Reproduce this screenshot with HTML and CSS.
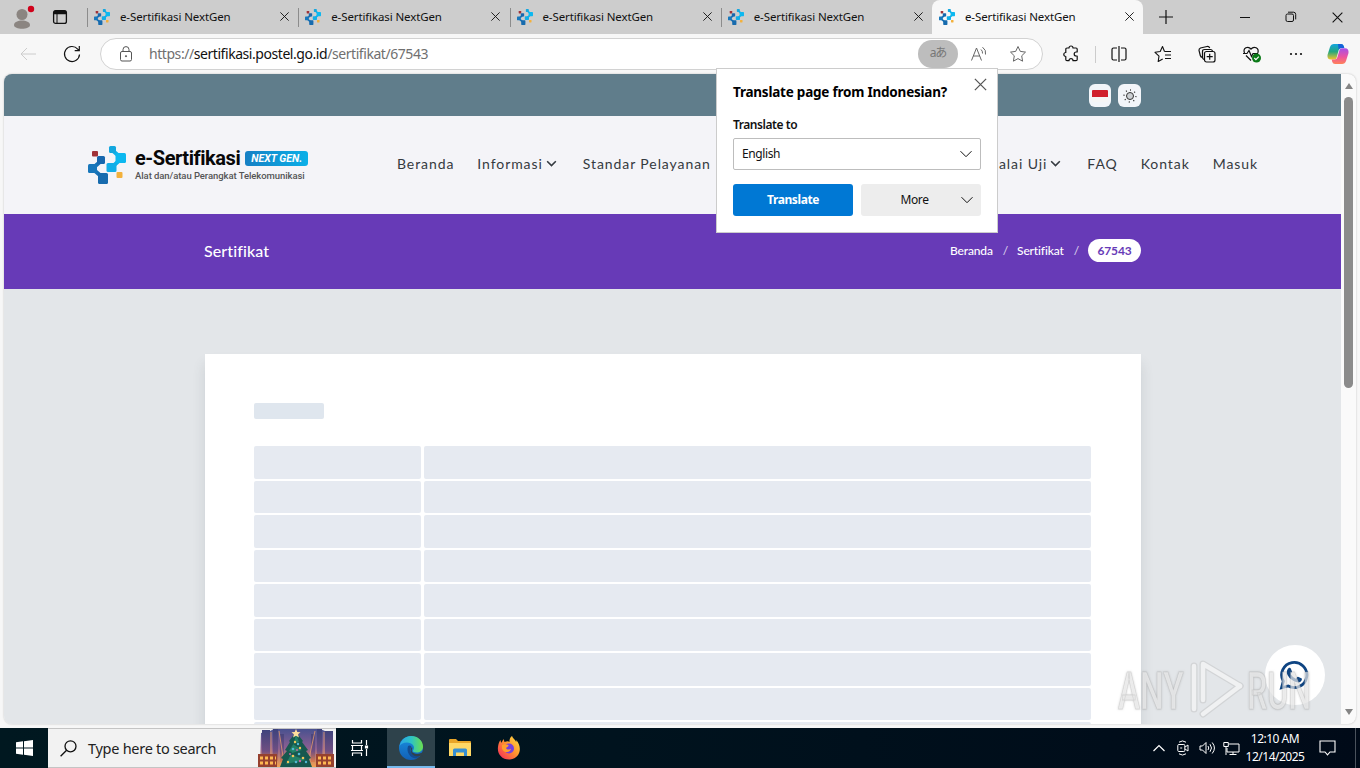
FILE: index.html
```html
<!DOCTYPE html>
<html lang="en">
<head>
    <meta charset="UTF-8">
    <meta name="viewport" content="width=device-width, initial-scale=1.0">
    <title>e-Sertifikasi NextGen</title>
    <link rel="stylesheet" href="styles.css">
</head>
<body>
    <!-- shared symbols -->
    <svg class="defs" width="0" height="0">
        <symbol id="logo" viewBox="0 0 38 38">
            <path fill="none" stroke="#1671b5" stroke-width="4" d="M13 15L5 22M6 24l8 7"/>
            <path fill="none" stroke="#0db2ea" stroke-width="4" d="M24 4l8 7M33 13l-9 8"/>
            <rect x="4" y="5" width="6" height="5.500" rx="1" fill="#a03238"/>
            <rect x="9" y="10" width="8" height="8" rx="1.500" fill="#1767ae"/>
            <rect x="0" y="18" width="9" height="9" rx="1.500" fill="#1877bb"/>
            <rect x="10" y="27" width="10" height="11" rx="1.500" fill="#176bae"/>
            <rect x="21" y="0" width="7" height="7" rx="1.500" fill="#13a7df"/>
            <rect x="27.500" y="7" width="10.500" height="10" rx="1.500" fill="#0db8f0"/>
            <rect x="18.500" y="17" width="10" height="9" rx="1.500" fill="#12aee8"/>
            <rect x="28.500" y="26" width="6" height="6" rx="1" fill="#f3b13c"/>
        </symbol>
        <symbol id="close" viewBox="0 0 12 12">
            <path fill="none" stroke="currentColor" d="M1.500 1.500l9 9M10.500 1.500l-9 9"/>
        </symbol>
        <symbol id="chev" viewBox="0 0 14 14">
            <path fill="none" stroke="currentColor" d="M1.500 4.200L7 9.700l5.500-5.500"/>
        </symbol>
    </svg>

    <div class="tabs">
        <div class="tabs-left">
            <svg class="profile" width="24" height="26" viewBox="0 0 24 26">
                <circle cx="11" cy="10.500" r="5.500" fill="#8b8581"/>
                <path fill="#8b8581" d="M3 21c0-6 16-6 16 0 0 5-16 5-16 0z"/>
                <circle cx="20" cy="5" r="3.200" fill="#d0021b"/>
            </svg>
            <svg class="workspace" width="16" height="16" viewBox="0 0 16 16" fill="none" stroke="#111">
                <rect x="1.600" y="1.600" width="12.800" height="12.800" rx="2" stroke-width="1.300"/>
                <path d="M2 3.500h12" stroke-width="3.500"/><path d="M5 4v10"/>
            </svg>
        </div>
        <div class="tab"><svg class="fav"><use href="#logo"/></svg><span>e-Sertifikasi NextGen</span><svg class="x"><use href="#close"/></svg></div>
        <div class="tab"><svg class="fav"><use href="#logo"/></svg><span>e-Sertifikasi NextGen</span><svg class="x"><use href="#close"/></svg></div>
        <div class="tab"><svg class="fav"><use href="#logo"/></svg><span>e-Sertifikasi NextGen</span><svg class="x"><use href="#close"/></svg></div>
        <div class="tab"><svg class="fav"><use href="#logo"/></svg><span>e-Sertifikasi NextGen</span><svg class="x"><use href="#close"/></svg></div>
        <div class="tab active"><svg class="fav"><use href="#logo"/></svg><span>e-Sertifikasi NextGen</span><svg class="x"><use href="#close"/></svg></div>
        <svg class="newtab" width="14" height="14" viewBox="0 0 14 14"><path stroke="#111" stroke-width="1.200" d="M7 0v14M0 7h14"/></svg>
        <div class="win">
            <svg width="12" height="12" viewBox="0 0 12 12"><path stroke="#111" d="M1 6.500h10"/></svg>
            <svg width="12" height="12" viewBox="0 0 12 12" fill="none" stroke="#111"><rect x="1" y="3" width="7.500" height="7.500" rx="1.500"/><path d="M3 1.200h5.500q2.200 0 2.200 2.200v5"/></svg>
            <svg width="13" height="13"><use href="#close"/></svg>
        </div>
    </div>

    <div class="toolbar">
        <svg class="back" width="16" height="14" viewBox="0 0 16 14" fill="none" stroke="#ccc"><path d="M16 7H1M7 1L1 7l6 6"/></svg>
        <svg class="reload" width="18" height="18" viewBox="0 0 18 18" fill="none" stroke="#111" stroke-width="1.200"><path d="M16.500 9.500a7.500 7.500 0 1 1-1.800-5.400l1.300 1.300M16.300 1v4.700h-4.600"/></svg>
        <div class="address">
            <svg class="lock" width="14" height="16" viewBox="0 0 14 16" fill="none" stroke="#555"><rect x="1.500" y="5.500" width="11" height="9.500" rx="1.500"/><path d="M4 5.500V3.600a3 3 0 0 1 6 0v1.900"/><circle cx="7" cy="10.200" r=".6" fill="#555"/></svg>
            <div class="url">https://<b>sertifikasi.postel.go.id</b>/sertifikat/67543</div>
            <div class="lang">aあ</div>
            <svg class="read" width="18" height="16" viewBox="0 0 18 16" fill="none" stroke="#666"><path d="M1.500 14.500L6.500 2l5 12.500M3.200 10h6.600M11 3.500q1.800 1.500 1.500 4M12.500 1.200q4 2.800 3 7.300"/></svg>
            <svg class="star" width="18" height="18" viewBox="0 0 18 18" fill="none" stroke="#666"><path stroke-linejoin="round" d="M9 1.500l2.300 4.900 5.200.7-3.800 3.700.9 5.400L9 13.600l-4.600 2.600.9-5.400L1.500 7.100l5.200-.7z"/></svg>
        </div>
        <div class="tools">
            <svg width="18" height="18" viewBox="0 0 18 18" fill="none" stroke="#111" stroke-width="1.200"><path stroke-linejoin="round" d="M5 3h2a2 2 0 0 1 4 0h3q1.200 0 1.200 1.200V7h-1a2 2 0 0 0 0 4h1v3.500q0 1.200-1.200 1.200h-3a2 2 0 0 0-4 0H5q-1.200 0-1.200-1.200V11.500a2 2 0 0 1 0-4V4.200Q3.800 3 5 3z"/></svg>
            <i class="sep"></i>
            <svg width="18" height="18" viewBox="0 0 18 18" fill="none" stroke="#111" stroke-width="1.200"><path d="M7 3H3.500Q2 3 2 4.500v9Q2 15 3.500 15H7M11 3h3.500Q16 3 16 4.500v9q0 1.500-1.500 1.500H11M9 1v16"/></svg>
            <svg width="18" height="18" viewBox="0 0 18 18" fill="none" stroke="#111" stroke-width="1.100"><path stroke-linejoin="round" d="M10.500 6.500L8.500 1.500 6.200 6.500l-5.200.8 4 3.900-.8 5.300 4.500-2.500M10.500 6.500H17M11 10h6M11 13.500h6"/></svg>
            <svg width="18" height="18" viewBox="0 0 18 18" fill="none" stroke="#111" stroke-width="1.200"><path d="M4.500 12.500Q2.800 12.300 2.300 10.500L1 5.500Q.8 3.800 2.500 3L9 1.500q2-.3 2.700 1.500M6 14.500q-1.500-.5-1.500-2.500V6.500q0-2 2-2h6q1.500 0 2 1.500"/><rect x="6.500" y="6.500" width="10.500" height="10.500" rx="2"/><path d="M11.700 8.700v6M8.700 11.700h6"/></svg>
            <svg width="20" height="18" viewBox="0 0 20 18" fill="none" stroke="#111" stroke-width="1.200"><path d="M2.500 8C.5 3 6 .5 9 4c3-3.500 8.500-1 6.800 4M1 8.500h4l2-3 2.500 6 1.500-3h5M4 10.500L9 15.500"/><circle cx="14.500" cy="13" r="4.500" fill="#0b7a18" stroke="none"/><path stroke="#fff" d="M12.300 13l1.600 1.600 2.900-3"/></svg>
            <svg width="16" height="18" viewBox="0 0 16 18" fill="#111"><circle cx="3" cy="9" r="1.100"/><circle cx="8" cy="9" r="1.100"/><circle cx="13" cy="9" r="1.100"/></svg>
            <svg class="copilot" width="22" height="22" viewBox="0 0 22 22">
                <defs>
                    <linearGradient id="ca" x2="0" y2="1"><stop stop-color="#13a5df"/><stop offset=".5" stop-color="#24a77e"/><stop offset="1" stop-color="#f4c52b"/></linearGradient>
                    <linearGradient id="cb" x2="0" y2="1"><stop stop-color="#a550e8"/><stop offset=".55" stop-color="#ed54a0"/><stop offset="1" stop-color="#ff8258"/></linearGradient>
                </defs>
                <path fill="url(#ca)" d="M7 1h7q2 0 2.700 2l.6 2h-3q-2 0-2.600 2L9.500 15q-.5 1.500-2 1.500H4Q0 16.500.5 12L3 4q1-3 4-3z"/>
                <path fill="#1462d9" d="M11 1h3q2 0 2.700 2l.6 2h-3q-2 0-2.600 2z"/>
                <path fill="url(#cb)" d="M15 21H8q-2 0-2.700-2l-.6-2.500h3q2 0 2.600-2L12.500 7q.5-1.700 2-1.700H18q4 0 3.500 4.700L19 18q-1 3-4 3z"/>
            </svg>
        </div>
    </div>

    <div class="view">
        <div class="page">
            <div class="topbar">
                <div class="chip"><i class="flag"></i></div>
                <div class="chip"><svg width="14" height="14" viewBox="0 0 14 14" fill="none" stroke="#333"><circle cx="7" cy="7" r="3.500" fill="#ccd0d4"/><path stroke-dasharray="1 3.710" d="M7 1a6 6 0 1 1-.01 0" stroke-width="1.300"/></svg></div>
            </div>
            <div class="header">
                <svg class="logo" width="38" height="38"><use href="#logo"/></svg>
                <div class="brand">
                    <div class="brand-top"><h1>e-Sertifikasi</h1><em>NEXT GEN.</em></div>
                    <p>Alat dan/atau Perangkat Telekomunikasi</p>
                </div>
                <div class="nav">
                    <a>Beranda</a>
                    <a class="drop">Informasi <svg><use href="#chev"/></svg></a>
                    <a>Standar Pelayanan</a>
                    <a class="drop push">Balai Uji <svg><use href="#chev"/></svg></a>
                    <a>FAQ</a>
                    <a>Kontak</a>
                    <a>Masuk</a>
                </div>
            </div>
            <div class="title">
                <h2>Sertifikat</h2>
                <div class="crumbs"><a>Beranda</a><i>/</i><a>Sertifikat</a><i>/</i><b>67543</b></div>
            </div>
            <div class="content">
                <div class="card">
                    <div class="skel-title"></div>
                    <div class="rows">
                        <div></div><div></div>
                        <div></div><div></div>
                        <div></div><div></div>
                        <div></div><div></div>
                        <div></div><div></div>
                        <div></div><div></div>
                        <div></div><div></div>
                        <div></div><div></div>
                        <div></div><div></div>
                    </div>
                </div>
            </div>
        </div>
        <div class="scroll"><i class="up"></i><i class="thumb"></i><i class="down"></i></div>
    </div>

    <div class="popup">
        <svg class="popup-x"><use href="#close"/></svg>
        <h3>Translate page from Indonesian?</h3>
        <label>Translate to</label>
        <div class="select"><span>English</span><svg><use href="#chev"/></svg></div>
        <div class="buttons">
            <div class="btn primary">Translate</div>
            <div class="btn more"><span>More</span><svg><use href="#chev"/></svg></div>
        </div>
    </div>

    <div class="wa">
        <svg width="30" height="30" viewBox="0 0 30 30"><path fill="none" stroke="#0e4482" stroke-width="2.800" d="M2.500 27.800l1.800-6.600A12.600 12.600 0 1 1 9.200 26z"/><path fill="#0e4482" d="M10 7.800q1.200-.5 1.800.6l1.200 3q.2.700-.3 1.300l-1.100 1.300q2 3.500 5.200 4.800l1.500-1.700q.5-.5 1.200-.2l2.900 1.400q.7.300.5 1.200c-.4 2.300-2.700 3.200-4.700 2.800-5-1.300-8.700-4.600-10.200-8.600-.7-2.300.4-4.900 2-5.900z"/></svg>
    </div>

    <svg class="watermark" width="220" height="66" viewBox="0 0 220 66">
        <g class="wm-text">
            <text transform="translate(2 53) scale(.64 1)">ANY</text>
            <text transform="translate(131 53) scale(.62 1)">RUN</text>
        </g>
        <g class="wm-shape">
            <path d="M78 10V53"/>
            <path d="M87 44V8L124 30"/>
            <path d="M124 30L87 58"/>
        </g>
        <g class="wm-core">
            <path d="M78 10V53"/>
            <path d="M87 44V8L124 30"/>
            <path d="M124 30L87 58"/>
        </g>
    </svg>

    <div class="taskbar">
        <div class="start"><svg width="17" height="16" viewBox="0 0 17 16" fill="#fff"><path d="M0 2.300L7 1.300v6.200H0zM8 1.200L17 0v7.500H8zM0 8.500h7v6.200l-7-1zM8 8.500h9V16l-9-1.200z"/></svg></div>
        <div class="search">
            <svg width="17" height="17" viewBox="0 0 17 17" fill="none" stroke="#111" stroke-width="1.300"><circle cx="10.500" cy="6.300" r="5.500"/><path d="M6.600 10.200L.6 16.200"/></svg>
            <span>Type here to search</span>
            <svg class="tree" width="77" height="38" viewBox="0 0 77 38">
                <defs>
                    <linearGradient id="sky" x2="0" y2="1"><stop stop-color="#49518f"/><stop offset=".5" stop-color="#8a5f91"/><stop offset="1" stop-color="#f3a250"/></linearGradient>
                    <linearGradient id="tower" x2="0" y2="1"><stop stop-color="#3c427c"/><stop offset=".65" stop-color="#704f82"/><stop offset="1" stop-color="#e68145"/></linearGradient>
                </defs>
                <path fill="url(#sky)" d="M3 4l9-2 4-2h46l5 2 8 2v34H2z"/>
                <path fill="url(#tower)" d="M4 1h8v33H4zM15 0h5v32h-5zM22 5h4v28h-4zM53 5h4v28h-4zM59 0h5v32h-5zM67 2h8v30h-8z"/>
                <path stroke="#e59a69" stroke-width=".8" d="M21 2l5 32M57 2l-7 32M13 3v25M66 3v25"/>
                <path fill="#96412f" d="M0 25h19v13H0zM58 25h18v13H58z"/>
                <path stroke="#ffb751" stroke-width="3" stroke-dasharray="3 2" d="M2 29h16M2 34h16M60 29h15M60 34h15"/>
                <path fill="#17584f" d="M38 3l7 9-1 1 6 8-2 1 5 7-2 1 3 8H22l3-8-2-1 6-7-2-1 5-8-1-1z"/>
                <path fill="#238067" d="M38 5l3 8-6 2 9 6-13 4 17 6-20 4 6-12-3-1 5-8z"/>
                <g fill="#f3c55b"><circle cx="37" cy="13" r="1.200"/><circle cx="42" cy="19" r="1.200"/><circle cx="35" cy="27" r="1.300"/><circle cx="45" cy="29" r="1.300"/><circle cx="30" cy="33" r="1.200"/></g>
                <g fill="#50b8d4"><circle cx="40" cy="15" r="1.200"/><circle cx="35" cy="20" r="1.300"/><circle cx="41" cy="25" r="1.300"/><circle cx="38" cy="33" r="1.300"/><circle cx="48" cy="33" r="1.200"/></g>
                <g fill="#c864a0"><circle cx="39" cy="21" r="1"/><circle cx="32" cy="25" r="1"/><circle cx="42" cy="32" r="1.200"/></g>
                <path fill="#ffdf9d" d="M38 0l1.300 3 3.200.3-2.400 2 .8 3.100-2.900-1.600-2.900 1.600.8-3.100-2.400-2 3.200-.3z"/>
            </svg>
        </div>
        <div class="task view-tasks"><svg width="18" height="18" viewBox="0 0 18 18" fill="none" stroke="#fff" stroke-width="1.200"><path d="M1.500 1v3h9V1M1.500 17v-3h9v3M1.500 6v6M10.500 6v6M0 6.500h12M0 11.500h12M15.500 1v5M15.500 10v7"/><path fill="#fff" d="M14.500 7h2v2h-2z"/></svg></div>
        <div class="task current">
            <svg width="24" height="24" viewBox="0 0 24 24">
                <defs>
                    <linearGradient id="ea"><stop stop-color="#2ba4e8"/><stop offset=".5" stop-color="#2dc3c4"/><stop offset="1" stop-color="#6bdf4c"/></linearGradient>
                    <linearGradient id="eb" x2="0" y2="1"><stop stop-color="#198fe0"/><stop offset="1" stop-color="#1260b6"/></linearGradient>
                </defs>
                <circle cx="12" cy="12" r="12" fill="url(#eb)"/>
                <path fill="#134c91" d="M9 10c-2 6 2 12 8 12.500 2-.8 4-2.500 5-4.500-5 2.500-10 .5-10.500-3.500-.2-2 .5-3 1-4-1-1.200-2.500-1.500-3.500-.5z"/>
                <path fill="#30414a" d="M13 11c.8 1.800-.5 3-.3 4 .5 2.500 5.500 4 9.300 2l2-1v5l-1.200-1.500c-5 2-11 0-11-5 0-1.500 0-2.500 1.200-3.500z"/>
                <path fill="url(#ea)" d="M.5 10C2 3.500 7 0 12 0c7 0 12 5 12 10.500 0 4-3 6-6.500 6-2.500 0-4-1-3.500-2 3-4-1-8-6-8-3.500 0-6 1.500-7.500 3.500z"/>
            </svg>
        </div>
        <div class="task"><svg width="22" height="18" viewBox="0 0 22 18"><path fill="#e9a528" d="M0 1q0-1 1-1h6l2 2h12q1 0 1 1v4H0z"/><path fill="#ffd866" d="M0 4h22v13H0z"/><path fill="#378fd2" d="M4 17v-6q0-1.500 1.500-1.500h11q1.500 0 1.500 1.500v6h-3v-3.500H7V17z"/></svg></div>
        <div class="task">
            <svg width="24" height="24" viewBox="0 0 24 24">
                <defs><linearGradient id="fx" x1="1" x2="0" y2="1"><stop stop-color="#ffe545"/><stop offset=".45" stop-color="#ff962f"/><stop offset="1" stop-color="#f3205d"/></linearGradient></defs>
                <path fill="url(#fx)" d="M15 0c1 3 3 3 4.200 6 .2-1 .1-1.500 0-2C25 10 24.500 22 13 23.500 5 24 0 18 1 11c.3-3 1-5 2.500-7 .2 1.500.5 2 1 2.800L6.500 3l1 3c3-1 4-.7 5 0C12.300 3.500 13 1.500 15 0z"/>
                <circle cx="12" cy="12.500" r="5" fill="#7540dd"/>
                <path fill="#ff9f2c" d="M5 9c2-1 4-1 6.500 0 .5 1.500-2 2-2.500 3 1 2.500 4 1.500 5 .5-.5 4-7 5.500-9 0z"/>
            </svg>
        </div>
        <div class="tray">
            <svg class="t-up" width="12" height="8" viewBox="0 0 12 8" fill="none" stroke="#fff" stroke-width="1.200"><path d="M.5 7L6 1.500 11.500 7"/></svg>
            <svg class="t-cam" width="12" height="16" viewBox="0 0 12 16" fill="none" stroke="#fff"><rect x=".8" y="4.500" width="7" height="7" rx="1"/><path d="M8 7l3-2v6L8 9M2 2.200Q5.500-.3 9 2.200M2 13.800q3.500 2.500 7 0M3.200 8h2"/></svg>
            <svg class="t-vol" width="17" height="14" viewBox="0 0 17 14" fill="none" stroke="#fff"><path d="M1 5h2.500L7 1.500v11L3.500 9H1zM9 5q1.500 2 0 4M11 3.200q3 3.800 0 7.600M13.200 1.500q4.500 5.500 0 11"/></svg>
            <svg class="t-net" width="17" height="15" viewBox="0 0 17 15" fill="none" stroke="#fff"><path d="M6 3h10v8H4V7M10 11v3M6.500 13.500h7"/><path d="M.8 1.500h4.500v4H.8zM3 5.500V14"/></svg>
            <div class="clock"><span>12:10 AM</span><span>12/14/2025</span></div>
            <svg class="t-note" width="17" height="16" viewBox="0 0 17 16" fill="none" stroke="#fff" stroke-width="1.100"><path d="M1 1h15v11h-5l-2.500 2.800L6 12H1z"/></svg>
            <i class="peek"></i>
        </div>
    </div>
</body>
</html>
```

FILE: styles.css
```css
* {
    box-sizing: border-box;
}
body {
    margin: 0;
    width: 1360px;
    height: 768px;
    overflow: hidden;
    position: relative;
    background: #f7f7f7;
    color: #111;
    font-family: "Noto Sans", sans-serif;
    font-size: 12px;
}
svg {
    display: block;
    flex: none;
}
h1, h2, h3, p {
    margin: 0;
}
.defs {
    position: absolute;
}

/* tab strip */
.tabs {
    display: flex;
    height: 34px;
    background: #cdcdcd;
}
.tabs-left {
    width: 87px;
    display: flex;
    padding: 4px 0 0 11px;
}
.workspace {
    margin: 5px 0 0 17px;
}
.tab {
    width: 211.25px;
    display: flex;
    align-items: center;
    padding: 0 0 1px 7px;
    background: linear-gradient(#8c8c8c, #8c8c8c) 0 8px / 1px 19px no-repeat;
}
.tab span {
    width: 159px;
    margin-left: 10px;
    font-size: 11.5px;
    letter-spacing: -0.12px;
    white-space: nowrap;
}
.fav {
    width: 16px;
    height: 16px;
}
.x {
    width: 11px;
    height: 11px;
}
.active {
    background: #f7f7f7;
    border-radius: 8px 8px 0 0;
}
.newtab {
    margin: 10px 0 0 16px;
}
.win {
    display: flex;
    align-items: center;
    gap: 34px;
    margin-left: 66px;
}

/* toolbar */
.toolbar {
    display: flex;
    align-items: center;
    height: 40px;
    padding-left: 20px;
}
.reload {
    margin-left: 27px;
}
.address {
    display: flex;
    align-items: center;
    width: 943px;
    height: 32px;
    margin-left: 19px;
    padding-left: 18px;
    background: #fff;
    border: 1px solid #d2d2d2;
    border-radius: 16px;
}
.url {
    width: 769px;
    margin-left: 16px;
    padding-bottom: 1px;
    font-size: 14px;
    letter-spacing: -0.44px;
    color: #707070;
}
.url b {
    font-weight: 400;
    color: #111;
}
.lang {
    width: 40px;
    height: 28px;
    border-radius: 14px;
    background: #bdbdbd;
    color: #777;
    font: 12px/26px "Noto Sans", "Noto Sans CJK JP", sans-serif;
    text-align: center;
    letter-spacing: -1px;
}
.read {
    margin-left: 12px;
}
.star {
    margin-left: 21px;
}
.tools {
    display: flex;
    align-items: center;
    gap: 26px;
    margin-left: 19px;
}
.sep {
    width: 1px;
    height: 17px;
    margin: 0 -12px 0 -11px;
    background: #ccc;
}
.copilot {
    margin-left: -3px;
}

/* site */
.view {
    display: flex;
    width: 1352px;
    height: 650px;
    margin-left: 4px;
    overflow: hidden;
    border-radius: 8px;
    background: #fafafa;
    box-shadow: 0 0 2px #bbb;
}
.page {
    width: 1337px;
    overflow: hidden;
    background: #e3e6e9;
    font-family: Lato, sans-serif;
}
.topbar {
    display: flex;
    gap: 7px;
    height: 42px;
    padding: 10px 0 0 1085px;
    background: #607d8b;
}
.chip {
    display: flex;
    align-items: center;
    justify-content: center;
    width: 22px;
    height: 23px;
    border-radius: 6px;
    background: #f2f5f9;
}
.chip + .chip {
    width: 23px;
}
.flag {
    width: 16px;
    height: 12px;
    border-radius: 1px;
    background: linear-gradient(#d01f2c 55%, #f5f5f5 55%);
}
.header {
    display: flex;
    align-items: center;
    height: 98px;
    padding-left: 84px;
    background: #f4f4f8;
}
.brand {
    width: 262px;
    margin: 0 0 2px 9px;
    font-family: Roboto, sans-serif;
}
.brand-top {
    display: flex;
    align-items: center;
}
.brand h1 {
    font-size: 20px;
    line-height: 24px;
    font-weight: 700;
    letter-spacing: -0.45px;
    color: #080808;
}
.brand em {
    width: 63px;
    height: 15px;
    margin-left: 5px;
    border-radius: 3px;
    background: linear-gradient(90deg, #1680c4, #0bb0e8);
    color: #fff;
    font-size: 10.5px;
    font-weight: 700;
    line-height: 15px;
    text-align: center;
}
.brand p {
    font-size: 9.5px;
    font-weight: 500;
    line-height: 12px;
    letter-spacing: -0.07px;
    color: #555;
}
.nav {
    display: flex;
    flex: 1;
    padding-bottom: 4px;
    font-size: 14px;
    letter-spacing: 0.92px;
    color: #343a40;
    white-space: nowrap;
    gap: 23px;
}
.drop {
    display: flex;
    align-items: center;
    gap: 3px;
    margin-right: 3px;
}
.drop svg {
    width: 11px;
    height: 11px;
    stroke-width: 2;
}
.push {
    margin-left: auto;
}
.nav a:last-child {
    margin-right: 83px;
}
.title {
    display: flex;
    align-items: center;
    justify-content: space-between;
    height: 75px;
    padding: 0 200px 2px;
    background: #673ab7;
    color: #fff;
}
.title h2 {
    font-size: 16px;
    font-weight: 500;
    letter-spacing: 0.1px;
}
.crumbs {
    display: flex;
    align-items: center;
    font-size: 12px;
    font-weight: 500;
    letter-spacing: -0.15px;
}
.crumbs i {
    margin: 0 9px 0 10px;
    font-style: normal;
    color: #d8cceb;
}
.crumbs b {
    width: 53px;
    height: 23px;
    border-radius: 12px;
    background: #fff;
    color: #673ab7;
    line-height: 23px;
    text-align: center;
}
.content {
    padding: 65px 200px 0 201px;
}
.card {
    height: 500px;
    padding: 49px;
    background: #fff;
    box-shadow: 0 10px 12px rgba(60, 70, 80, .14);
}
.skel-title {
    width: 70px;
    height: 16px;
    border-radius: 2px;
    background: #dfe6ee;
}
.rows {
    display: grid;
    grid-template-columns: 167px 667px;
    grid-auto-rows: 32.5px;
    gap: 2px 3px;
    margin-top: 27px;
}
.rows div {
    border-radius: 2px;
    background: #e6eaf1;
}

/* scrollbar */
.scroll {
    display: flex;
    flex-direction: column;
    align-items: center;
    width: 15px;
    padding: 9px 0 9px;
}
.up, .down {
    border: 4.5px solid transparent;
    border-top: 0;
    border-bottom: 6px solid #858585;
}
.down {
    margin-top: auto;
    border-top: 6px solid #858585;
    border-bottom: 0;
}
.thumb {
    width: 9px;
    height: 291px;
    margin-top: 8px;
    border-radius: 5px;
    background: #8b8b8b;
}

/* translate popup */
.popup {
    position: absolute;
    left: 716px;
    top: 68px;
    width: 282px;
    height: 165px;
    padding: 14px 16px;
    background: #fff;
    border: 1px solid #ccc;
}
.popup-x {
    position: absolute;
    right: 9px;
    top: 8px;
    width: 15px;
    height: 15px;
    color: #555;
}
.popup h3 {
    font-size: 13.5px;
    line-height: 18px;
    letter-spacing: -0.22px;
    color: #000;
    white-space: nowrap;
}
.popup label {
    display: block;
    margin-top: 15px;
    font-weight: 600;
    line-height: 18px;
    letter-spacing: -0.45px;
}
.select {
    display: flex;
    align-items: center;
    justify-content: space-between;
    height: 32px;
    margin-top: 4px;
    padding: 0 7px 1px 8px;
    border: 1px solid #bdbdbd;
    border-radius: 2px;
    letter-spacing: -0.4px;
}
.select svg, .more svg {
    width: 14px;
    height: 14px;
}
.buttons {
    display: flex;
    gap: 8px;
    margin-top: 14px;
}
.btn {
    width: 120px;
    height: 32px;
    border-radius: 3px;
    line-height: 32px;
    text-align: center;
    letter-spacing: -0.4px;
}
.primary {
    background: #0078d4;
    color: #fff;
    font-weight: 700;
}
.more {
    display: flex;
    align-items: center;
    background: #ededed;
}
.more span {
    width: 99px;
    padding-left: 8px;
}

/* chat button and overlay mark */
.wa {
    position: absolute;
    left: 1265px;
    top: 645px;
    display: flex;
    align-items: center;
    justify-content: center;
    width: 60px;
    height: 60px;
    padding-right: 2px;
    border-radius: 50%;
    background: #fff;
}
.watermark {
    position: absolute;
    left: 1116px;
    top: 656px;
}
.wm-text {
    font-family: Roboto, sans-serif;
    font-size: 52px;
    font-weight: 500;
    fill: rgba(248, 248, 248, .6);
    stroke: rgba(150, 150, 150, .25);
    stroke-width: 1;
    filter: drop-shadow(0 0 1px rgba(110, 110, 110, .5));
}
.wm-shape, .wm-core {
    fill: none;
    stroke: #d2d4d6;
    stroke-width: 7;
    stroke-linecap: round;
    stroke-linejoin: round;
}
.wm-core {
    stroke: #f0f1f2;
    stroke-width: 4.5;
}

/* taskbar */
.taskbar {
    display: flex;
    height: 40px;
    margin-top: 4px;
    background: linear-gradient(90deg, #001820, #00131e 45%, #000a18);
    color: #fff;
}
.start, .task {
    display: flex;
    align-items: center;
    justify-content: center;
    width: 48px;
}
.task {
    margin-right: 1px;
}
.view-tasks {
    margin-right: 3px;
}
.search {
    display: flex;
    align-items: center;
    width: 288px;
    padding-left: 12px;
    background: #f2f2f2;
    border: solid #c4c4c4;
    border-width: 1px 0;
    color: #222;
}
.search span {
    width: 170px;
    margin-left: 11px;
    font-size: 14.5px;
    letter-spacing: -0.28px;
    white-space: nowrap;
}
.current {
    background: #2e424b;
    border-bottom: 2px solid #76b9ed;
}
.current svg {
    margin-top: 1px;
}
.tray {
    display: flex;
    align-items: center;
    margin-left: auto;
}
.t-cam {
    margin-left: 12px;
}
.t-vol {
    margin-left: 10px;
}
.t-net {
    margin-left: 7px;
}
.clock {
    display: flex;
    flex-direction: column;
    align-items: center;
    width: 70px;
    margin: 0 9px 0 0;
    line-height: 18px;
    letter-spacing: -0.5px;
}
.peek {
    width: 1px;
    height: 40px;
    margin: 0 4px 0 19px;
    background: #4a525c;
}
```
